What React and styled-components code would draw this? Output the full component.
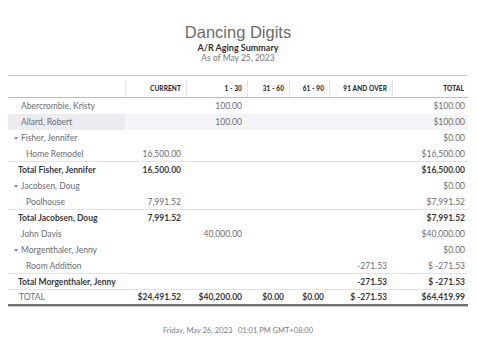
import React from "react";
import styled, { createGlobalStyle } from "styled-components";

const GlobalStyle = createGlobalStyle`
  * { box-sizing: border-box; }
  body {
    margin: 0;
    background: #ffffff;
    font-family: Lato, "Liberation Sans", sans-serif;
  }
`;

const COLS = "117px 61px 61px 42px 40px 63px 76px";

const Page = styled.div`
  width: 477px;
  height: 342px;
  padding: 23px 9px 0 8px;
  background: #fff;
`;

const Heading = styled.header`
  display: flex;
  flex-direction: column;
  align-items: center;
`;

const Company = styled.h1`
  margin: 0;
  font-family: "Liberation Sans", Arial, sans-serif;
  font-weight: 400;
  font-size: 16.5px;
  line-height: 18px;
  color: #6a6a6a;
`;

const ReportName = styled.h2`
  margin: 1px 0 0;
  font-size: 9px;
  line-height: 11px;
  font-weight: 700;
  color: #2f3033;
`;

const AsOf = styled.div`
  font-size: 8.5px;
  line-height: 11px;
  color: #76777a;
`;

const Table = styled.div`
  margin-top: 11px;
  border-top: 1.5px solid #c9c9c9;
`;

const HeadRow = styled.div`
  display: grid;
  grid-template-columns: ${COLS};
  padding-top: 4px;
  border-bottom: 1px solid #bdbdbd;
`;

const HeadCell = styled.div`
  height: 17px;
  display: flex;
  align-items: center;
  justify-content: flex-end;
  padding-right: ${(p) => p.$pr ?? 5}px;
  border-left: ${(p) => (p.$first ? "none" : "1px solid #e6e6e6")};
  font-size: 6.5px;
  font-weight: 900;
  letter-spacing: 0.1px;
  color: #2f3033;
`;

const Row = styled.div`
  display: grid;
  grid-template-columns: ${COLS};
  height: 16px;
  background: ${(p) => (p.$hover ? "#f4f5f8" : "transparent")};
  border-bottom: ${(p) =>
    p.$grand ? "2px solid #6f6f6f" : p.$line ? "1px solid #e3e3e3" : "none"};
  box-shadow: ${(p) => (p.$grand ? "0 1px 0 #c8c8c8" : "none")};
  font-weight: ${(p) => (p.$bold ? 700 : 400)};
  color: ${(p) => (p.$bold ? "#393a3d" : "#6b6c72")};
`;

const NameCell = styled.div`
  display: flex;
  align-items: center;
  gap: 3px;
  padding-left: ${(p) => p.$indent}px;
  background: ${(p) => (p.$hover ? "#ebecf0" : "transparent")};
  font-size: 8.5px;
  white-space: nowrap;
`;

const Caret = styled.span`
  width: 0;
  height: 0;
  border-left: 2px solid transparent;
  border-right: 2px solid transparent;
  border-top: 3px solid #8a8b90;
`;

const NumCell = styled.div`
  display: flex;
  align-items: center;
  justify-content: flex-end;
  padding-right: ${(p) => p.$pr ?? 5}px;
  font-size: 8.5px;
  font-weight: ${(p) => (p.$strong ? 700 : "inherit")};
  color: ${(p) => (p.$strong ? "#393a3d" : "inherit")};
  white-space: nowrap;
`;

const Footer = styled.div`
  margin-top: 20px;
  text-align: center;
  font-size: 7.5px;
  color: #7a7b7e;
  white-space: pre;
`;

const headers = ["CURRENT", "1 - 30", "31 - 60", "61 - 90", "91 AND OVER", "TOTAL"];

const rows = [
  { name: "Abercrombie, Kristy", indent: 13, vals: ["", "100.00", "", "", "", "$100.00"] },
  { name: "Allard, Robert", indent: 13, hover: true, vals: ["", "100.00", "", "", "", "$100.00"] },
  { name: "Fisher, Jennifer", indent: 6, caret: true, vals: ["", "", "", "", "", "$0.00"] },
  { name: "Home Remodel", indent: 18, line: true, vals: ["16,500.00", "", "", "", "", "$16,500.00"] },
  { name: "Total Fisher, Jennifer", indent: 10, bold: true, vals: ["16,500.00", "", "", "", "", "$16,500.00"] },
  { name: "Jacobsen, Doug", indent: 6, caret: true, vals: ["", "", "", "", "", "$0.00"] },
  { name: "Poolhouse", indent: 18, line: true, vals: ["7,991.52", "", "", "", "", "$7,991.52"] },
  { name: "Total Jacobsen, Doug", indent: 10, bold: true, vals: ["7,991.52", "", "", "", "", "$7,991.52"] },
  { name: "John Davis", indent: 13, vals: ["", "40,000.00", "", "", "", "$40,000.00"] },
  { name: "Morgenthaler, Jenny", indent: 6, caret: true, vals: ["", "", "", "", "", "$0.00"] },
  { name: "Room Addition", indent: 18, line: true, vals: ["", "", "", "", "-271.53", "$ -271.53"] },
  { name: "Total Morgenthaler, Jenny", indent: 10, bold: true, line: true, vals: ["", "", "", "", "-271.53", "$ -271.53"] },
  { name: "TOTAL", indent: 11, grand: true, vals: ["$24,491.52", "$40,200.00", "$0.00", "$0.00", "$ -271.53", "$64,419.99"] },
];

export default function App() {
  return (
    <>
      <GlobalStyle />
      <Page>
        <Heading>
          <Company>Dancing Digits</Company>
          <ReportName>A/R Aging Summary</ReportName>
          <AsOf>As of May 25, 2023</AsOf>
        </Heading>
        <Table>
          <HeadRow>
            <HeadCell $first />
            {headers.map((h, i) => (
              <HeadCell key={h} $pr={i === 5 ? 4 : 5}>
                {h}
              </HeadCell>
            ))}
          </HeadRow>
          {rows.map((r) => (
            <Row key={r.name} $hover={r.hover} $line={r.line} $grand={r.grand} $bold={r.bold}>
              <NameCell $indent={r.indent} $hover={r.hover}>
                {r.caret && <Caret />}
                {r.name}
              </NameCell>
              {r.vals.map((v, i) => (
                <NumCell key={i} $pr={i === 5 ? 3 : 5} $strong={r.grand}>
                  {v}
                </NumCell>
              ))}
            </Row>
          ))}
        </Table>
        <Footer>{"Friday, May 26, 2023   01:01 PM GMT+08:00"}</Footer>
      </Page>
    </>
  );
}
